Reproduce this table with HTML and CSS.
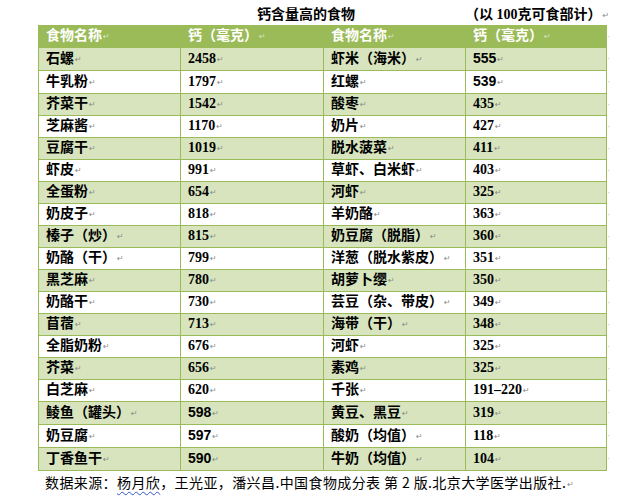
FILE: index.html
```html
<!DOCTYPE html>
<html lang="zh">
<head>
<meta charset="utf-8">
<title>钙含量高的食物</title>
<link rel="stylesheet" href="styles.css">
</head>
<body>
<div class="title"><span class="t1">钙含量高的食物</span><span class="t2">（以 100克可食部计）<span class="pm">↵</span></span></div>
<table class="ca">
<colgroup><col class="c1"><col class="c2"><col class="c3"><col class="c4"><col class="c5"></colgroup>
<tr class="head"><td>食物名称<span class="pm">↵</span></td><td>钙（毫克）<span class="pm">↵</span></td><td>食物名称<span class="pm">↵</span></td><td>钙（毫克）<span class="pm">↵</span></td><td class="end">·</td></tr>
<tr class="g"><td>石螺<span class="pm">↵</span></td><td>2458<span class="pm">↵</span></td><td>虾米（海米）<span class="pm">↵</span></td><td class="sn">555<span class="pm">↵</span></td><td class="end">·</td></tr>
<tr><td>牛乳粉<span class="pm">↵</span></td><td>1797<span class="pm">↵</span></td><td>红螺<span class="pm">↵</span></td><td class="sn">539<span class="pm">↵</span></td><td class="end">·</td></tr>
<tr class="g"><td>芥菜干<span class="pm">↵</span></td><td>1542<span class="pm">↵</span></td><td>酸枣<span class="pm">↵</span></td><td>435<span class="pm">↵</span></td><td class="end">·</td></tr>
<tr><td>芝麻酱<span class="pm">↵</span></td><td>1170<span class="pm">↵</span></td><td>奶片<span class="pm">↵</span></td><td>427<span class="pm">↵</span></td><td class="end">·</td></tr>
<tr class="g"><td>豆腐干<span class="pm">↵</span></td><td>1019<span class="pm">↵</span></td><td>脱水菠菜<span class="pm">↵</span></td><td>411<span class="pm">↵</span></td><td class="end">·</td></tr>
<tr><td>虾皮<span class="pm">↵</span></td><td>991<span class="pm">↵</span></td><td>草虾、白米虾<span class="pm">↵</span></td><td>403<span class="pm">↵</span></td><td class="end">·</td></tr>
<tr class="g"><td>全蛋粉<span class="pm">↵</span></td><td>654<span class="pm">↵</span></td><td>河虾<span class="pm">↵</span></td><td>325<span class="pm">↵</span></td><td class="end">·</td></tr>
<tr><td>奶皮子<span class="pm">↵</span></td><td>818<span class="pm">↵</span></td><td>羊奶酪<span class="pm">↵</span></td><td>363<span class="pm">↵</span></td><td class="end">·</td></tr>
<tr class="g"><td>榛子（炒）<span class="pm">↵</span></td><td>815<span class="pm">↵</span></td><td>奶豆腐（脱脂）<span class="pm">↵</span></td><td>360<span class="pm">↵</span></td><td class="end">·</td></tr>
<tr><td>奶酪（干）<span class="pm">↵</span></td><td>799<span class="pm">↵</span></td><td>洋葱（脱水紫皮）<span class="pm">↵</span></td><td>351<span class="pm">↵</span></td><td class="end">·</td></tr>
<tr class="g"><td>黑芝麻<span class="pm">↵</span></td><td>780<span class="pm">↵</span></td><td>胡萝卜缨<span class="pm">↵</span></td><td>350<span class="pm">↵</span></td><td class="end">·</td></tr>
<tr><td>奶酪干<span class="pm">↵</span></td><td>730<span class="pm">↵</span></td><td>芸豆（杂、带皮）<span class="pm">↵</span></td><td>349<span class="pm">↵</span></td><td class="end">·</td></tr>
<tr class="g"><td>苜蓿<span class="pm">↵</span></td><td>713<span class="pm">↵</span></td><td>海带（干）<span class="pm">↵</span></td><td>348<span class="pm">↵</span></td><td class="end">·</td></tr>
<tr><td>全脂奶粉<span class="pm">↵</span></td><td>676<span class="pm">↵</span></td><td>河虾<span class="pm">↵</span></td><td>325<span class="pm">↵</span></td><td class="end">·</td></tr>
<tr class="g"><td>芥菜<span class="pm">↵</span></td><td>656<span class="pm">↵</span></td><td>素鸡<span class="pm">↵</span></td><td>325<span class="pm">↵</span></td><td class="end">·</td></tr>
<tr><td>白芝麻<span class="pm">↵</span></td><td>620<span class="pm">↵</span></td><td>千张<span class="pm">↵</span></td><td>191–220<span class="pm">↵</span></td><td class="end">·</td></tr>
<tr class="g"><td>鲮鱼（罐头）<span class="pm">↵</span></td><td class="sn">598<span class="pm">↵</span></td><td>黄豆、黑豆<span class="pm">↵</span></td><td>319<span class="pm">↵</span></td><td class="end">·</td></tr>
<tr><td>奶豆腐<span class="pm">↵</span></td><td class="sn">597<span class="pm">↵</span></td><td>酸奶（均值）<span class="pm">↵</span></td><td>118<span class="pm">↵</span></td><td class="end">·</td></tr>
<tr class="g"><td>丁香鱼干<span class="pm">↵</span></td><td class="sn">590<span class="pm">↵</span></td><td>牛奶（均值）<span class="pm">↵</span></td><td>104<span class="pm">↵</span></td><td class="end">·</td></tr>
</table>
<p class="source">数据来源：<span class="spell">杨月欣</span>，王光亚，潘兴昌.中国食物成分表 第 2 版.北京大学医学出版社.<span class="pm">↵</span></p>
</body>
</html>
```

FILE: styles.css
```css
html, body {
  margin: 0;
  padding: 0;
  background: #ffffff;
}
body {
  width: 640px;
  height: 502px;
  overflow: hidden;
  font-family: "Liberation Serif", "Noto Sans CJK SC", serif;
  color: #000;
}
.title {
  display: flex;
  align-items: center;
  height: 25px;
  font-size: 14px;
  font-weight: 700;
}
.title .t1 {
  margin-left: 257px;
  width: 208px;
}
.pm {
  font-family: "DejaVu Sans", sans-serif;
  font-size: 8px;
  font-weight: 400;
  color: #8a8a8a;
  margin-left: 1px;
  vertical-align: 1px;
  letter-spacing: 0;
}
.ca {
  margin-left: 38px;
  border-collapse: collapse;
  table-layout: fixed;
}
.c1 { width: 142px; }
.c2 { width: 143px; }
.c3 { width: 142px; }
.c4 { width: 141px; }
.c5 { width: 20px; }
.ca tr {
  height: 22px;
}
.ca td {
  border: 1px solid #9bbb59;
  padding: 0 0 0 7px;
  font-size: 14px;
  font-weight: 700;
  line-height: 20px;
  white-space: nowrap;
  overflow: hidden;
}
.ca tr.g td {
  background: #d7e4bd;
}
.ca tr.head td {
  background: #9bbb59;
  color: #ffffff;
  font-weight: 700;
}
.ca tr.head .pm {
  color: #d8e6c0;
}
.ca td.sn {
  font-family: "Liberation Sans", "Noto Sans CJK SC", sans-serif;
}
.ca td.end,
.ca tr.g td.end,
.ca tr.head td.end {
  border: none;
  background: none;
  color: #c8c8c8;
  font-size: 10px;
  font-weight: 400;
  padding-left: 0;
}
.source {
  margin: 0 0 0 45px;
  font-family: "Noto Sans CJK SC", sans-serif;
  font-size: 14px;
  font-weight: 400;
  line-height: 22px;
  letter-spacing: 0.4px;
  white-space: nowrap;
}
.spell {
  text-decoration: underline wavy #3355cc;
  text-decoration-thickness: 1px;
  text-underline-offset: 3px;
}
```
